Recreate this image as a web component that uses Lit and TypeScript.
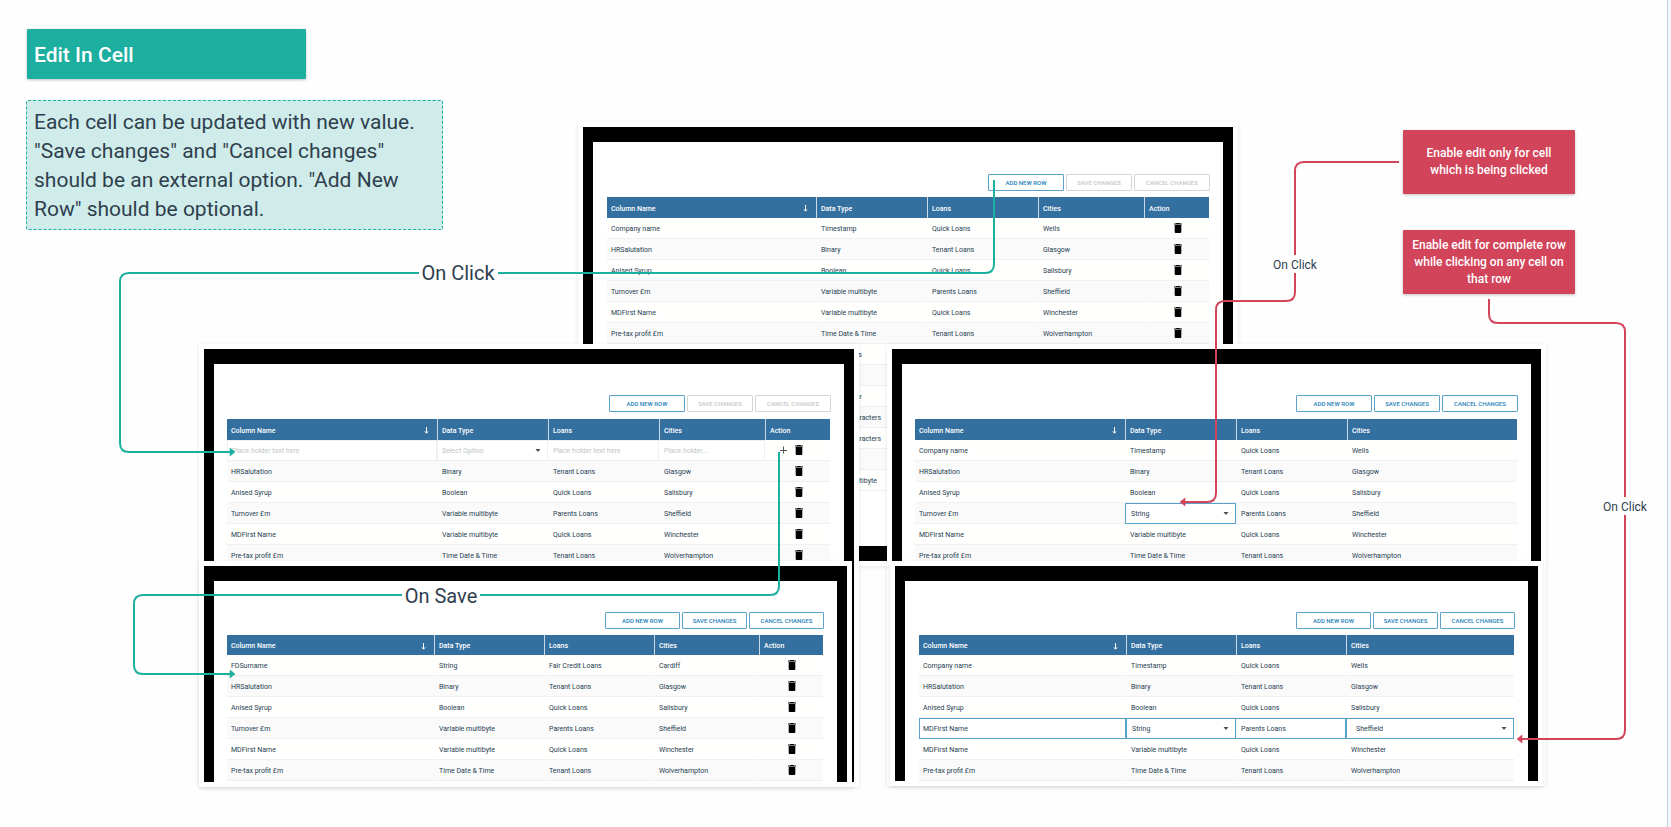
import { LitElement, html, css, svg, nothing } from "lit";
import { customElement, property } from "lit/decorators.js";
import { classMap } from "lit/directives/class-map.js";
import { styleMap } from "lit/directives/style-map.js";

type EditKind = "cell" | "row" | "new";

interface Mockup {
  id: string;
  left: number;
  top: number;
  width: number;
  height: number;
  columns: number[];
  rows: string[][];
  actions: boolean;
  canSave: boolean;
  dense?: boolean;
  tight?: boolean;
  closed?: boolean;
  edit?: { row: number; kind: EditKind };
}

const HEADERS = ["Column Name", "Data Type", "Loans", "Cities", "Action"];

const BASE_ROWS = [
  ["Company name", "Timestamp", "Quick Loans", "Wells"],
  ["HRSalutation", "Binary", "Tenant Loans", "Glasgow"],
  ["Anised Syrup", "Boolean", "Quick Loans", "Salisbury"],
  ["Turnover £m", "Variable multibyte", "Parents Loans", "Sheffield"],
  ["MDFirst Name", "Variable multibyte", "Quick Loans", "Winchester"],
  ["Pre-tax profit £m", "Time Date & Time", "Tenant Loans", "Wolverhampton"],
];

const replaceRow = (index: number, row: string[]) =>
  BASE_ROWS.map((r, i) => (i === index ? row : r));

const MOCKUPS: Mockup[] = [
  {
    id: "start",
    left: 578, top: 122, width: 660, height: 444,
    columns: [209, 111, 111, 106, 65],
    rows: [
      ...BASE_ROWS,
      ["", "Time stamps", "", ""],
      ["", "Binary", "", ""],
      ["", "Large integer", "", ""],
      ["", "Variable characters", "", ""],
      ["", "Variable characters", "", ""],
      ["", "Boolean", "", ""],
      ["", "Variable multibyte", "", ""],
    ],
    actions: true, canSave: false, closed: true,
  },
  {
    id: "adding",
    left: 199, top: 344, width: 660, height: 443,
    columns: [210, 111, 111, 106, 65],
    rows: replaceRow(0, ["Place holder text here", "Select Option", "Place holder text here", "Place holder..."]),
    actions: true, canSave: false, tight: true, edit: { row: 0, kind: "new" },
  },
  {
    id: "saved",
    left: 199, top: 561, width: 653, height: 226,
    columns: [207, 110, 110, 105, 64],
    rows: replaceRow(0, ["FDSurname", "String", "Fair Credit Loans", "Cardiff"]),
    actions: true, canSave: true, dense: true, tight: true,
  },
  {
    id: "cell-edit",
    left: 887, top: 344, width: 659, height: 442,
    columns: [210, 111, 111, 170],
    rows: replaceRow(3, ["Turnover £m", "String", "Parents Loans", "Sheffield"]),
    actions: false, canSave: true, tight: true, edit: { row: 3, kind: "cell" },
  },
  {
    id: "row-edit",
    left: 890, top: 561, width: 653, height: 225,
    columns: [207, 110, 110, 168],
    rows: replaceRow(3, ["MDFirst Name", "String", "Parents Loans", "Sheffield"]),
    actions: false, canSave: true, dense: true, edit: { row: 3, kind: "row" },
  },
];

@customElement("grid-mockup")
export class GridMockup extends LitElement {
  @property({ attribute: false }) data!: Mockup;

  static styles = css`
    :host { display: block; height: 100%; font-family: Roboto, "Liberation Sans", sans-serif; }
    * { box-sizing: border-box; }
    .card {
      height: 100%;
      padding: 5px;
      background: #fff;
      box-shadow: 0 1px 4px rgba(0, 0, 0, 0.1);
      overflow: hidden;
    }
    .screen {
      height: 100%;
      border: 10px solid #000;
      border-top-width: 15px;
      border-bottom-width: 0;
      padding: 31px 14px 0;
      background: #fff;
      overflow: hidden;
    }
    .screen.closed { border-bottom-width: 15px; padding-top: 32px; }
    .screen.dense { padding-top: 31px; }
    .screen.tight { padding-left: 13px; }
    .toolbar {
      display: flex;
      justify-content: flex-end;
      gap: 2px;
      padding-bottom: 7px;
      margin-right: -1px;
    }
    .closed .toolbar, .dense .toolbar { padding-bottom: 6px; }
    .tool {
      height: 17px;
      width: 76px;
      padding: 0;
      border: 1px solid #5ba3cb;
      border-radius: 1px;
      background: #fff;
      color: #1d7fb8;
      font: 500 6px/15px Roboto, sans-serif;
      text-transform: uppercase;
      white-space: nowrap;
    }
    .tool.narrow { width: 66px; }
    .dense .tool { width: 75px; }
    .dense .tool.narrow { width: 65px; }
    .tool:disabled { border-color: #d6d6d6; color: #c6c6c6; }
    table { width: 100%; table-layout: fixed; border-collapse: separate; border-spacing: 0; }
    th {
      height: 21px;
      padding: 2px 4px 0;
      background: #34709f;
      border-left: 1px solid #c9d9e6;
      color: #fff;
      font-size: 7px;
      font-weight: 500;
      line-height: 10px;
      text-align: left;
    }
    .dense th { height: 20px; }
    th:first-child, td:first-child { border-left-width: 0; }
    .head { display: flex; align-items: center; justify-content: space-between; padding-right: 4px; }
    .sort { width: 5px; height: 7px; }
    td {
      height: 21px;
      padding: 2px 4px 0;
      border-left: 1px solid transparent;
      border-bottom: 1px solid #f0f0f1;
      background: #fffffd;
      color: #1f3e52;
      font-size: 7px;
      line-height: 10px;
      white-space: nowrap;
    }
    tr:nth-child(even) td { background: #fafafb; }
    td.field { padding: 0; border-left-width: 0; background: #fff; border-bottom: 0; }
    tr:nth-child(even) td.field { background: #fff; }
    .control {
      display: block;
      width: 100%;
      height: 21px;
      margin: 0;
      padding: 1px 4px 0;
      border: 1px solid #57a1ca;
      border-radius: 0;
      background: #fff;
      color: #1f3e52;
      font: 7px/10px Roboto, sans-serif;
      appearance: none;
      outline: none;
    }
    input.control { padding-left: 3px; }
    .joined .control { border-left-width: 0; padding-left: 5px; }
    .pick .control { padding-left: 5px; }
    .pick.wide .control { padding-left: 9px; }
    .blank .control, .blank.pick .control { border-color: #efefef; padding-left: 4px; color: #c2c6c9; }
    .blank.joined .control { padding-left: 5px; }
    .control::placeholder { color: #c2c6c9; opacity: 1; }
    .picker { display: grid; align-items: center; }
    .picker > * { grid-area: 1 / 1; }
    .caret { width: 6px; height: 3px; justify-self: end; margin-right: 7px; pointer-events: none; }
    td.act { padding: 0 27px 0 4px; }
    .acts { display: flex; justify-content: flex-end; align-items: center; gap: 8px; }
    .icon { display: block; padding: 0; border: 0; background: none; height: 10px; }
    .trash { display: block; width: 8px; height: 10px; }
    .plus { display: block; width: 8px; height: 10px; }
  `;

  private field(text: string, col: number) {
    const { edit, id } = this.data;
    const isNew = edit!.kind === "new";
    const label = HEADERS[col];
    const isPick = col === 1 || (col === 3 && edit!.kind === "row");
    const cls = classMap({
      field: true,
      pick: isPick,
      joined: col > 0 && !isPick,
      wide: col === 3,
      blank: isNew,
    });
    return html`<td class=${cls}>
      ${isPick
        ? html`<div class="picker">
            <select class="control" name="${id}-${col}" aria-label=${label}><option>${text}</option></select>
            <svg class="caret" viewBox="0 0 6 3"><path d="M0.5 0h5L3 3z" fill="#4d4d4d" /></svg>
          </div>`
        : isNew
          ? html`<input class="control" name="${id}-${col}" aria-label=${label} placeholder=${text} />`
          : html`<input class="control" name="${id}-${col}" aria-label=${label} .value=${text} />`}
    </td>`;
  }

  private cell(text: string, row: number, col: number) {
    const { edit } = this.data;
    const editing = edit?.row === row && (edit.kind !== "cell" || col === 1);
    return editing ? this.field(text, col) : html`<td>${text}</td>`;
  }

  private actionCell(row: number) {
    const { edit } = this.data;
    return html`<td class="act"><div class="acts">
      ${edit?.kind === "new" && edit.row === row
        ? html`<button class="icon" aria-label="Add row">
            <svg class="plus" viewBox="0 0 8 10"><path d="M4.5 1.5v7M1 5.5h7" stroke="#555" stroke-width="1" fill="none" /></svg>
          </button>`
        : nothing}
      <button class="icon" aria-label="Delete row">
        <svg class="trash" viewBox="0 0 8 10">
          <path d="M2.5 0h3l.5.6h2v1H0v-1h2zM.7 2h6.6V9q0 1-1 1H1.7q-1 0-1-1z" fill="#000" />
        </svg>
      </button>
    </div></td>`;
  }

  render() {
    const m = this.data;
    const headers = m.actions ? HEADERS : HEADERS.slice(0, 4);
    return html`
      <div class="card">
        <div class=${classMap({ screen: true, closed: !!m.closed, dense: !!m.dense, tight: !!m.tight })}>
          <div class="toolbar">
            <button class="tool">Add new row</button>
            <button class="tool narrow" ?disabled=${!m.canSave}>Save changes</button>
            <button class="tool" ?disabled=${!m.canSave}>Cancel changes</button>
          </div>
          <table>
            <colgroup>${m.columns.map((w) => html`<col style=${styleMap({ width: `${w}px` })} />`)}</colgroup>
            <thead>
              <tr>
                ${headers.map((h, i) => html`<th scope="col">${i === 0
                  ? html`<div class="head"><span>${h}</span>
                      <svg class="sort" viewBox="0 0 5 7"><path d="M2.5 0v6M.9 4.4 2.5 6.2 4.1 4.4" stroke="#fff" fill="none" /></svg></div>`
                  : h}</th>`)}
              </tr>
            </thead>
            <tbody>
              ${m.rows.map((r, ri) => html`<tr>
                ${r.map((text, ci) => this.cell(text, ri, ci))}
                ${m.actions ? this.actionCell(ri) : nothing}
              </tr>`)}
            </tbody>
          </table>
        </div>
      </div>`;
  }
}

const TEAL = "#1cae9f";
const RED = "#d2445a";

const CONNECTORS = [
  { color: TEAL, d: "M994 180V264Q994 273 985 273H498M419 273H129Q120 273 120 282V443Q120 452 129 452H231", tip: "M230 448v8l5-4z" },
  { color: TEAL, d: "M779 452V586Q779 595 770 595H480M402 595H143Q134 595 134 604V665Q134 674 143 674H231", tip: "M230 670v8l5-4z" },
  { color: RED, d: "M1399 162H1304Q1295 162 1295 171V255M1295 273V292Q1295 301 1286 301H1225Q1216 301 1216 310V493Q1216 502 1207 502H1184", tip: "M1185 498v8l-5-4z" },
  { color: RED, d: "M1489 299V314Q1489 323 1498 323H1616Q1625 323 1625 332V497M1625 515V730Q1625 739 1616 739H1521", tip: "M1522 735v8l-5-4z" },
];

const LABELS = [
  { text: "On Click", x: 458, y: 273, large: true },
  { text: "On Save", x: 441, y: 596, large: true },
  { text: "On Click", x: 1295, y: 265, large: false },
  { text: "On Click", x: 1625, y: 507, large: false },
];

@customElement("app-root")
export class AppRoot extends LitElement {
  static styles = css`
    :host {
      display: flex;
      min-height: 100vh;
      background: #fefefe;
      color: #2f3f4e;
      font-family: Roboto, "Liberation Sans", sans-serif;
    }
    * { box-sizing: border-box; }
    .board { flex: 1; position: relative; overflow: hidden; }
    .rail { width: 4px; border-left: 1px solid #c3cfdb; background: #f3f6f9; }
    .node { position: absolute; }
    .title {
      left: 27px; top: 29px; width: 279px; margin: 0; padding: 12px 7px 10px;
      background: #1cae9f; color: #fff;
      border-radius: 1px;
      font-size: 21px; font-weight: 500; line-height: 28px;
      box-shadow: 0 1px 3px rgba(0, 0, 0, 0.25);
    }
    .note {
      left: 26px; top: 100px; width: 417px; margin: 0; padding: 7px 7px 5px;
      background: #cfecea; border: 1px dashed #1cae9f;
      border-radius: 2px;
      font-size: 21px; line-height: 29px;
    }
    .callout {
      left: 1403px; width: 172px; height: 64px; margin: 0; padding: 0 8px;
      display: flex; align-items: center; justify-content: center;
      background: #d2445a; color: #fff; border-radius: 1px;
      font-size: 12px; font-weight: 500; line-height: 17px; text-align: center;
      box-shadow: 0 1px 3px rgba(0, 0, 0, 0.25);
    }
    .single { top: 130px; }
    .whole { top: 230px; }
    .wires { position: absolute; inset: 0; width: 100%; height: 100%; pointer-events: none; }
    .label { transform: translate(-50%, -50%); font-size: 12px; line-height: 16px; white-space: nowrap; }
    .label.large { font-size: 20px; line-height: 24px; }
  `;

  render() {
    return html`
      <main class="board">
        <h1 class="node title">Edit In Cell</h1>
        <p class="node note">
          Each cell can be updated with new value. "Save changes" and "Cancel changes" should be an external option. "Add New Row" should be optional.
        </p>
        ${MOCKUPS.map((m) => html`<div class="node" style=${styleMap({
          left: `${m.left}px`, top: `${m.top}px`, width: `${m.width}px`, height: `${m.height}px`,
        })}><grid-mockup .data=${m}></grid-mockup></div>`)}
        <p class="node callout single">Enable edit only for cell which is being clicked</p>
        <p class="node callout whole">Enable edit for complete row while clicking on any cell on that row</p>
        <svg class="wires" aria-hidden="true">
          ${CONNECTORS.map((c) => svg`
            <path d=${c.d} fill="none" stroke=${c.color} stroke-width="2" />
            <path d=${c.tip} fill=${c.color} stroke=${c.color} stroke-width="0.6" />`)}
        </svg>
        ${LABELS.map((l) => html`<span class=${classMap({ node: true, label: true, large: l.large })}
          style=${styleMap({ left: `${l.x}px`, top: `${l.y}px` })}>${l.text}</span>`)}
      </main>
      <div class="rail"></div>`;
  }
}
